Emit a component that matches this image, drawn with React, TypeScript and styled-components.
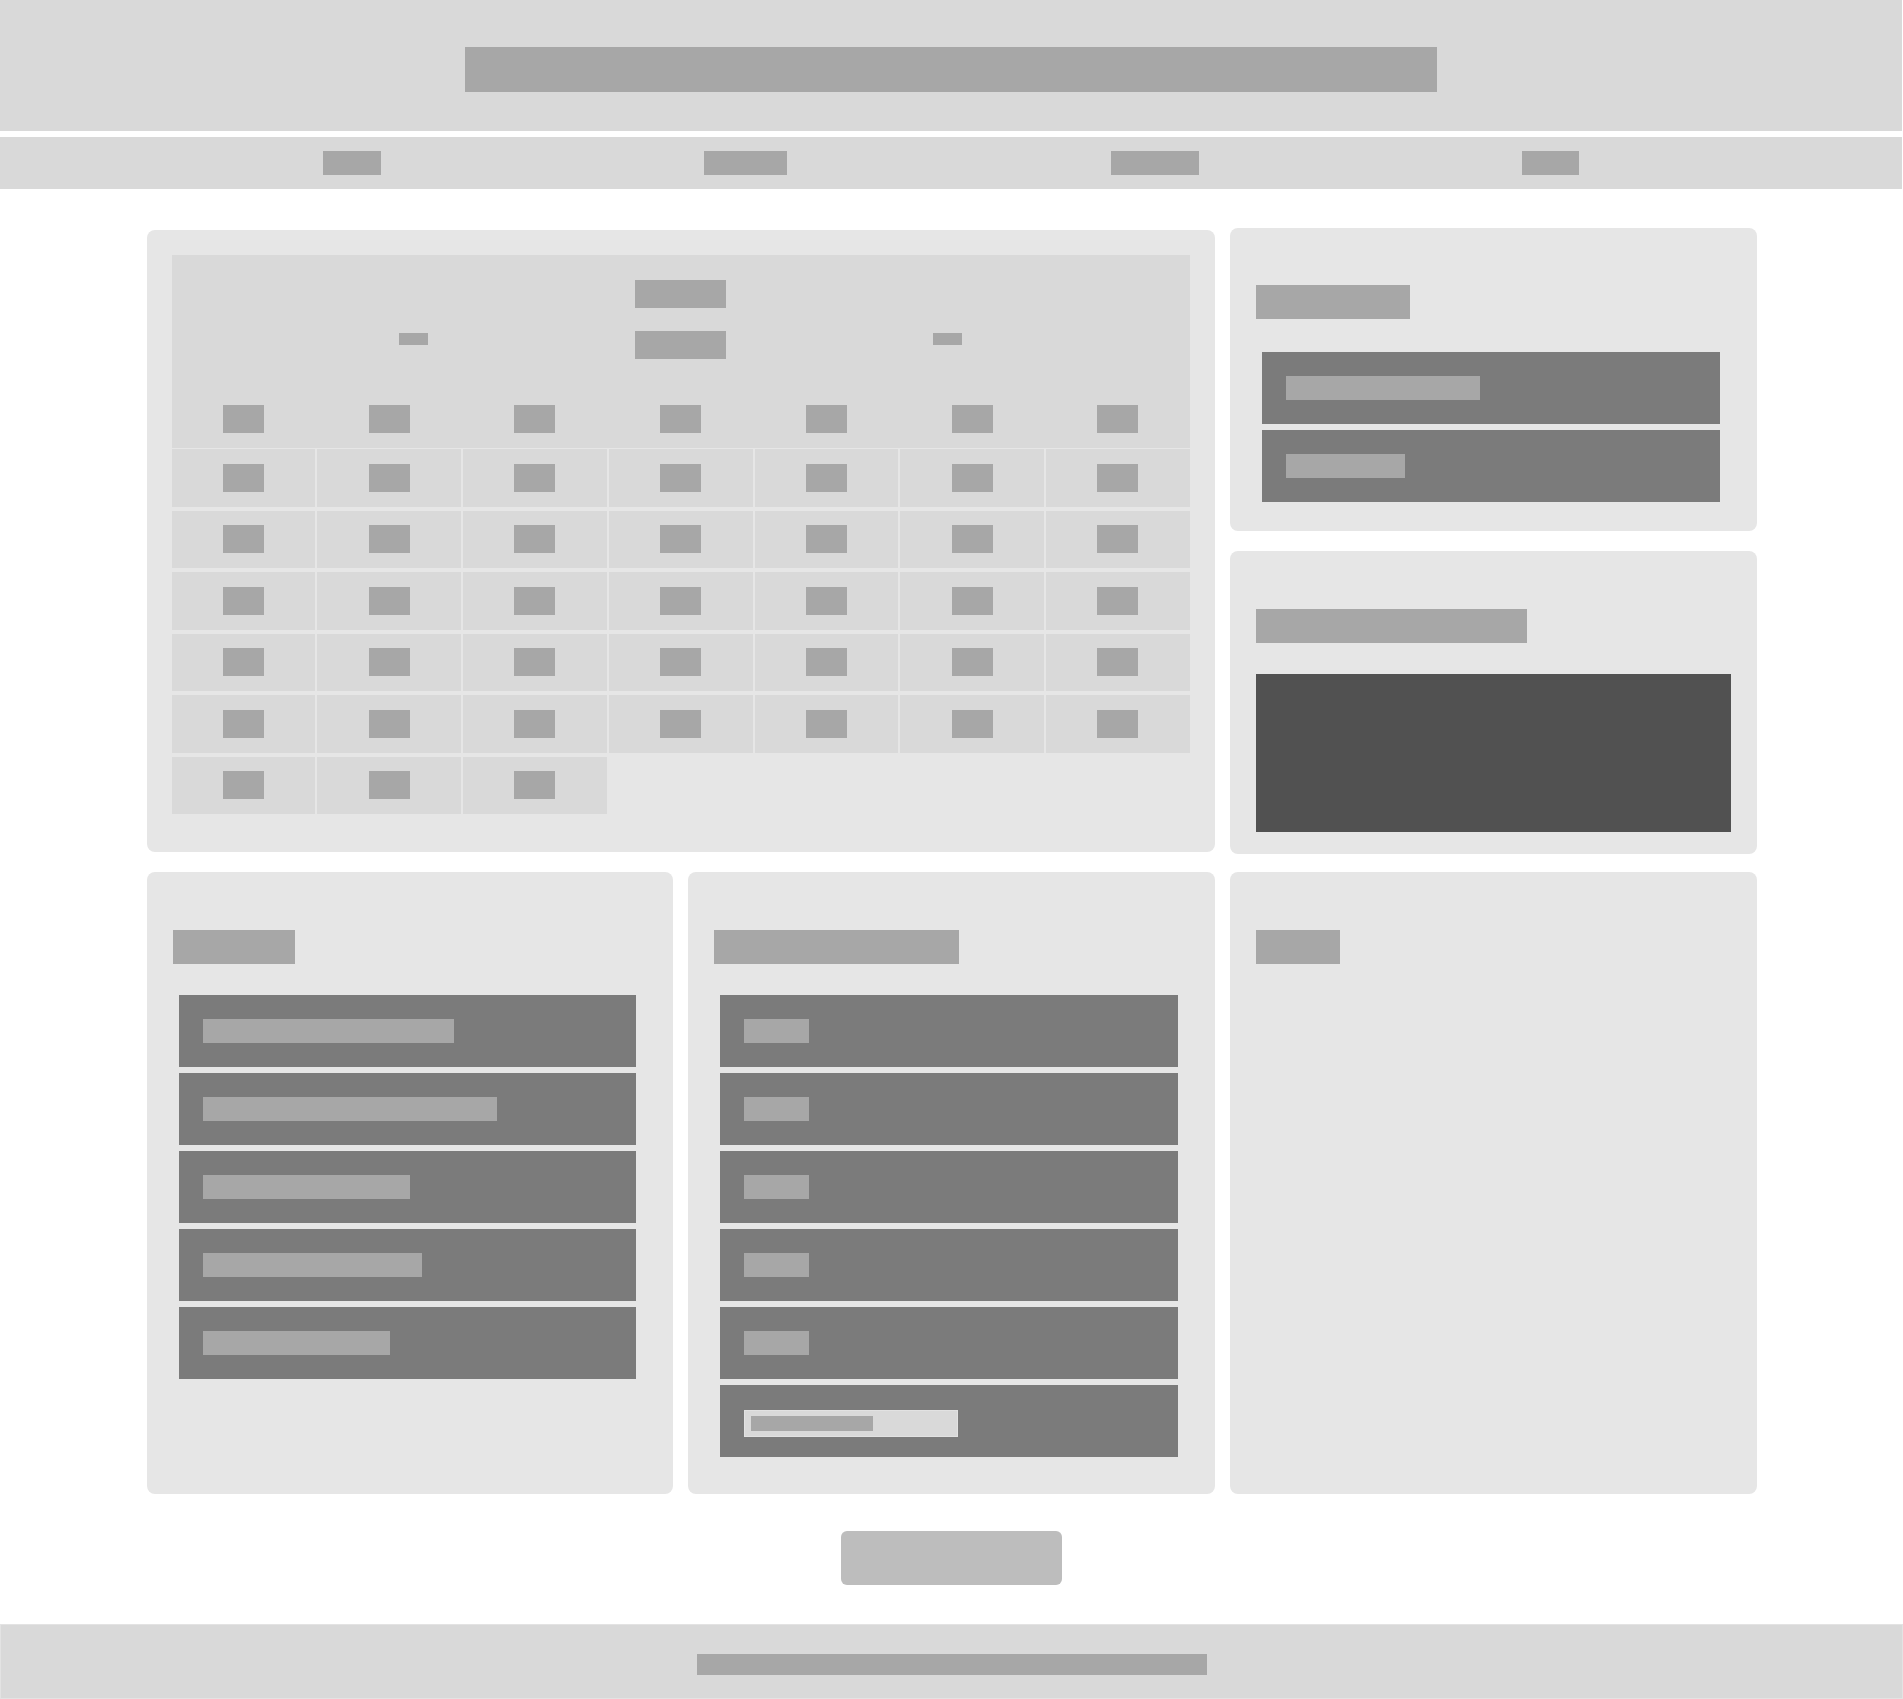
import React from 'react';
import styled, { createGlobalStyle } from 'styled-components';

const Global = createGlobalStyle`
  html, body { margin: 0; padding: 0; background: #ffffff; font-family: "Liberation Sans", Arial, sans-serif; }
  *, *::before, *::after { box-sizing: border-box; }
`;

const BLOCK = '#a7a7a7';

const Ghost = styled.span<{ $w: number; $h: number; $tone?: string }>`
  display: block;
  flex: none;
  width: ${p => p.$w}px;
  height: ${p => p.$h}px;
  background: ${p => p.$tone || BLOCK};
  color: ${p => p.$tone || BLOCK};
  font-size: ${p => Math.max(8, Math.round(p.$h * 0.6))}px;
  line-height: ${p => p.$h}px;
  overflow: hidden;
  white-space: nowrap;
`;

const Header = styled.header`
  width: calc(100% - 1px);
  height: 131px;
  padding-top: 47px;
  background: #d9d9d9;
  display: flex;
  justify-content: center;
`;

const Nav = styled.nav`
  width: calc(100% - 1px);
  margin-top: 6px;
  height: 52px;
  background: #d9d9d9;
  display: flex;
  justify-content: space-evenly;
  align-items: center;
`;

const Main = styled.main`
  width: 1610px;
  margin: 39px auto 0;
  display: grid;
  grid-template-columns: repeat(3, 1fr);
  column-gap: 15px;
  row-gap: 18px;
`;

const Card = styled.section<{ $top?: number; $bottom?: number }>`
  background: #e6e6e6;
  border-radius: 8px;
  padding: ${p => p.$top ?? 57}px 26px ${p => p.$bottom ?? 28}px;
  display: flex;
  flex-direction: column;
`;

const BottomCard = styled(Card)`
  min-height: 622px;
`;

const CalendarCard = styled.section`
  grid-column: span 2;
  margin: 2px 0 1.5px;
  background: #e6e6e6;
  border-radius: 8px;
  padding: 25px;
`;

const CalHead = styled.div`
  background: #d9d9d9;
  padding-top: 25px;
  display: flex;
  flex-direction: column;
  align-items: center;
`;

const YearRow = styled.div`
  margin-top: 23px;
  display: flex;
  align-items: flex-start;
  justify-content: center;
  gap: 207px;
`;

const Arrow = styled(Ghost)`
  margin-top: 2px;
`;

const WeekRow = styled.div`
  margin-top: 31px;
  width: 100%;
  height: 58px;
  display: grid;
  grid-template-columns: repeat(7, 1fr);
  column-gap: 2px;
  align-items: center;
  justify-items: center;
`;

const DayGrid = styled.div`
  margin-top: 1px;
  display: grid;
  grid-template-columns: repeat(7, 1fr);
  column-gap: 2px;
  row-gap: 4px;
  grid-auto-rows: 57.5px;
`;

const DayCell = styled.div`
  background: #d9d9d9;
  display: flex;
  align-items: center;
  justify-content: center;
`;

const SideColumn = styled.div`
  display: flex;
  flex-direction: column;
  gap: 19.5px;
`;

const Title = styled(Ghost)`
  margin-bottom: 31px;
`;

const List = styled.div<{ $top?: number }>`
  margin: ${p => p.$top || 0}px 11px 0 6px;
  display: flex;
  flex-direction: column;
  gap: 6px;
`;

const Row = styled.div`
  height: 72px;
  background: #7b7b7b;
  padding: 24px;
`;

const InputRow = styled(Row)`
  padding-top: 25px;
`;

const Field = styled.div`
  width: 214px;
  height: 27px;
  background: #d9d9d9;
  border: 1px solid #e2e2e2;
  padding: 5px 6px;
`;

const Chart = styled.div`
  width: 100%;
  height: 158px;
  background: #515151;
`;

const SubmitButton = styled.button`
  display: block;
  margin: 37px auto 0;
  width: 221px;
  height: 54px;
  border: none;
  border-radius: 6px;
  background: #bdbdbd;
  color: #bdbdbd;
  font-family: "Liberation Sans", Arial, sans-serif;
  font-size: 16px;
`;

const Footer = styled.footer`
  margin-top: 39px;
  height: 75px;
  background: #d9d9d9;
  border: 1px solid #e3e3e3;
  padding-top: 29px;
  display: flex;
  justify-content: center;
`;

const navItems: [string, number][] = [
  ['Home', 58],
  ['Rooms', 83],
  ['Bookings', 88],
  ['Help', 57],
];

const weekdays = ['Sun', 'Mon', 'Tue', 'Wed', 'Thu', 'Fri', 'Sat'];

const days = Array.from({ length: 38 }, (_, i) => String(i + 1));

const rooms: [string, number][] = [
  ['Board Room A - 12 seats', 251],
  ['Conference Hall B - 40 seats', 294],
  ['Meeting Room C - 6 seats', 207],
  ['Training Room D - 20 seats', 219],
  ['Huddle Space E - 4', 187],
];

const slots = ['09:00', '10:00', '11:00', '13:00', '15:00'];

export default function App() {
  return (
    <>
      <Global />
      <Header>
        <Ghost as="h1" $w={972} $h={45} style={{ margin: 0 }}>Conference Room Booking System</Ghost>
      </Header>
      <Nav>
        {navItems.map(([label, w]) => (
          <Ghost key={label} $w={w} $h={24}>{label}</Ghost>
        ))}
      </Nav>
      <Main>
        <CalendarCard>
          <CalHead>
            <Ghost $w={91} $h={28}>October</Ghost>
            <YearRow>
              <Arrow $w={29} $h={12}>‹</Arrow>
              <Ghost $w={91} $h={28}>2024</Ghost>
              <Arrow $w={29} $h={12}>›</Arrow>
            </YearRow>
            <WeekRow>
              {weekdays.map(d => (
                <Ghost key={d} $w={41} $h={28}>{d}</Ghost>
              ))}
            </WeekRow>
          </CalHead>
          <DayGrid>
            {days.map(d => (
              <DayCell key={d}>
                <Ghost $w={41} $h={28}>{d}</Ghost>
              </DayCell>
            ))}
          </DayGrid>
        </CalendarCard>
        <SideColumn>
          <Card $bottom={29}>
            <Title $w={154} $h={34}>Selected Date</Title>
            <List $top={2}>
              <Row><Ghost $w={194} $h={24}>Tuesday, October 15</Ghost></Row>
              <Row><Ghost $w={119} $h={24}>No bookings</Ghost></Row>
            </List>
          </Card>
          <Card $top={58} $bottom={22}>
            <Title $w={271} $h={34}>Availability Overview</Title>
            <Chart />
          </Card>
        </SideColumn>
        <BottomCard $top={58}>
          <Title $w={122} $h={34}>Rooms</Title>
          <List>
            {rooms.map(([r, w]) => (
              <Row key={r}><Ghost $w={w} $h={24}>{r}</Ghost></Row>
            ))}
          </List>
        </BottomCard>
        <BottomCard $top={58}>
          <Title $w={245} $h={34}>Available Time Slots</Title>
          <List>
            {slots.map(s => (
              <Row key={s}><Ghost $w={65} $h={24}>{s}</Ghost></Row>
            ))}
            <InputRow>
              <Field><Ghost $w={122} $h={15}>Custom time</Ghost></Field>
            </InputRow>
          </List>
        </BottomCard>
        <BottomCard $top={58}>
          <Title $w={84} $h={34}>Notes</Title>
        </BottomCard>
      </Main>
      <SubmitButton type="button">Book Room</SubmitButton>
      <Footer>
        <Ghost $w={510} $h={21}>© 2024 Conference Room Booking</Ghost>
      </Footer>
    </>
  );
}
